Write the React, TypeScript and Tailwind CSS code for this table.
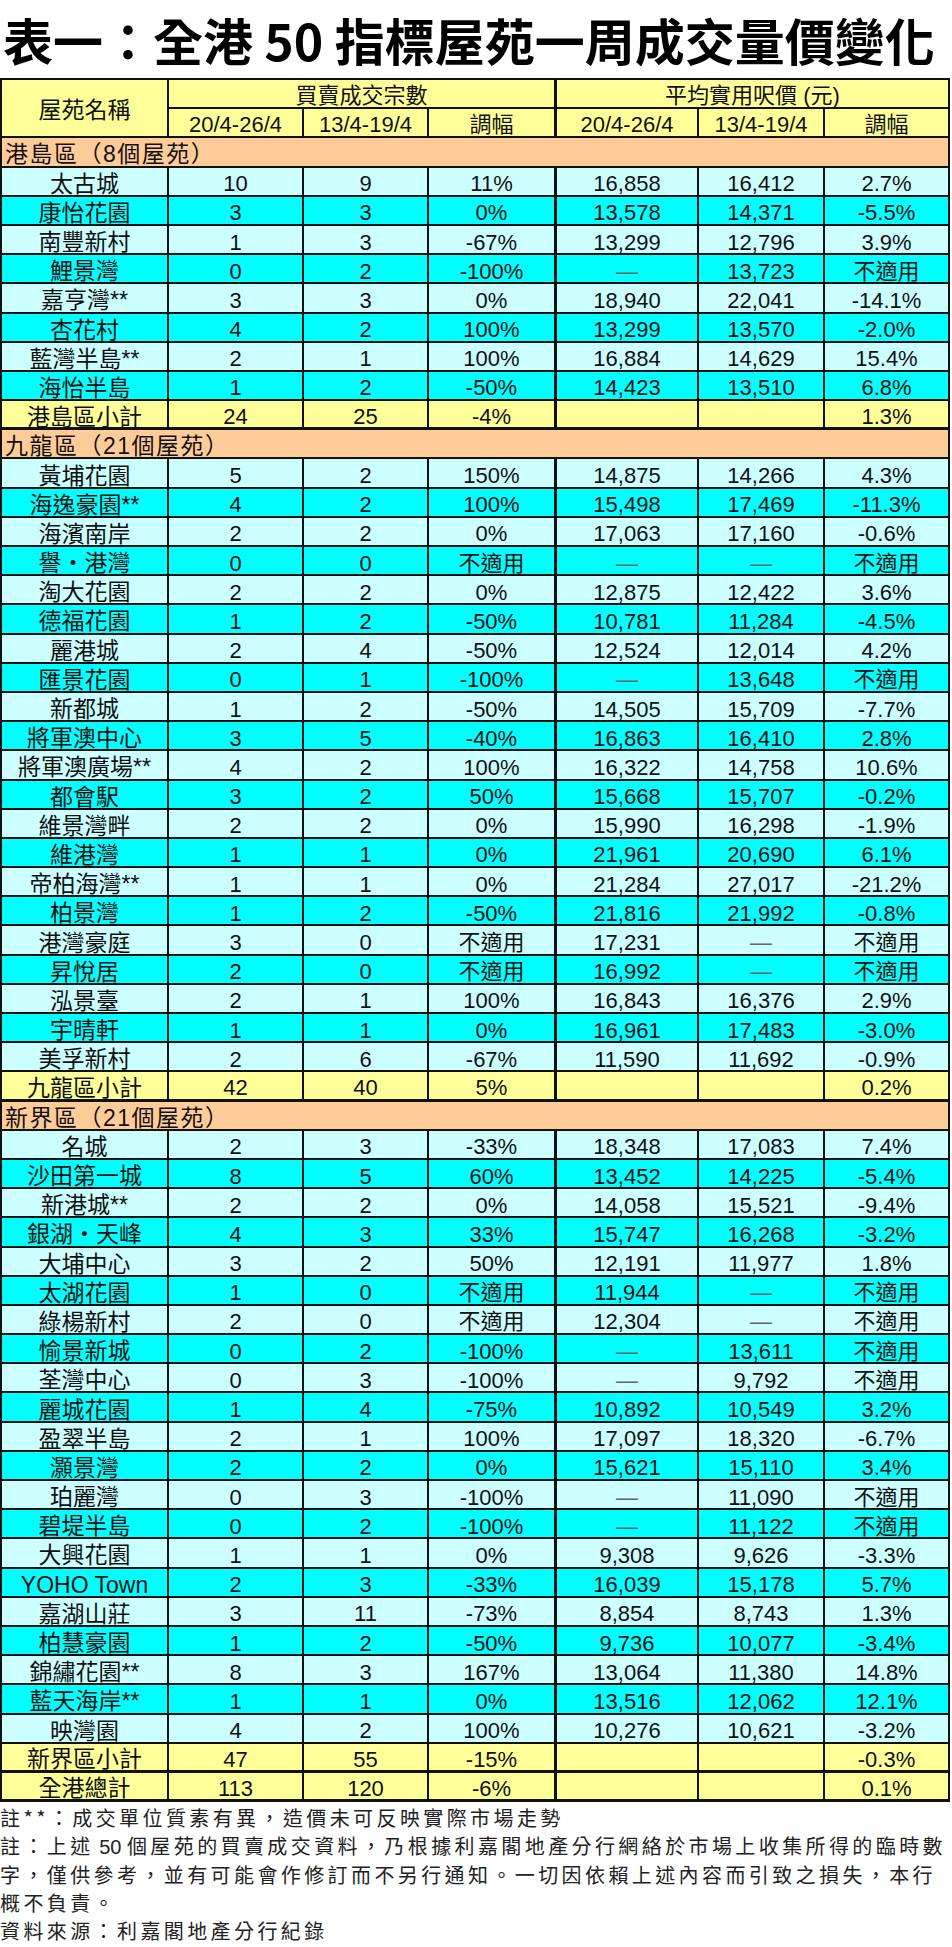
import React from "react";

type Row =
  | { k: "sec"; label: string }
  | { k: "d"; c: string[] }
  | { k: "s"; c: string[] };

const D = (...c: string[]): Row => ({ k: "d", c });
const S = (...c: string[]): Row => ({ k: "s", c });
const SEC = (label: string): Row => ({ k: "sec", label });

const rows: Row[] = [
  SEC("港島區（8個屋苑）"),
  D("太古城", "10", "9", "11%", "16,858", "16,412", "2.7%"),
  D("康怡花園", "3", "3", "0%", "13,578", "14,371", "-5.5%"),
  D("南豐新村", "1", "3", "-67%", "13,299", "12,796", "3.9%"),
  D("鯉景灣", "0", "2", "-100%", "—", "13,723", "不適用"),
  D("嘉亨灣**", "3", "3", "0%", "18,940", "22,041", "-14.1%"),
  D("杏花村", "4", "2", "100%", "13,299", "13,570", "-2.0%"),
  D("藍灣半島**", "2", "1", "100%", "16,884", "14,629", "15.4%"),
  D("海怡半島", "1", "2", "-50%", "14,423", "13,510", "6.8%"),
  S("港島區小計", "24", "25", "-4%", "", "", "1.3%"),
  SEC("九龍區（21個屋苑）"),
  D("黃埔花園", "5", "2", "150%", "14,875", "14,266", "4.3%"),
  D("海逸豪園**", "4", "2", "100%", "15,498", "17,469", "-11.3%"),
  D("海濱南岸", "2", "2", "0%", "17,063", "17,160", "-0.6%"),
  D("譽・港灣", "0", "0", "不適用", "—", "—", "不適用"),
  D("淘大花園", "2", "2", "0%", "12,875", "12,422", "3.6%"),
  D("德福花園", "1", "2", "-50%", "10,781", "11,284", "-4.5%"),
  D("麗港城", "2", "4", "-50%", "12,524", "12,014", "4.2%"),
  D("匯景花園", "0", "1", "-100%", "—", "13,648", "不適用"),
  D("新都城", "1", "2", "-50%", "14,505", "15,709", "-7.7%"),
  D("將軍澳中心", "3", "5", "-40%", "16,863", "16,410", "2.8%"),
  D("將軍澳廣場**", "4", "2", "100%", "16,322", "14,758", "10.6%"),
  D("都會駅", "3", "2", "50%", "15,668", "15,707", "-0.2%"),
  D("維景灣畔", "2", "2", "0%", "15,990", "16,298", "-1.9%"),
  D("維港灣", "1", "1", "0%", "21,961", "20,690", "6.1%"),
  D("帝柏海灣**", "1", "1", "0%", "21,284", "27,017", "-21.2%"),
  D("柏景灣", "1", "2", "-50%", "21,816", "21,992", "-0.8%"),
  D("港灣豪庭", "3", "0", "不適用", "17,231", "—", "不適用"),
  D("昇悅居", "2", "0", "不適用", "16,992", "—", "不適用"),
  D("泓景臺", "2", "1", "100%", "16,843", "16,376", "2.9%"),
  D("宇晴軒", "1", "1", "0%", "16,961", "17,483", "-3.0%"),
  D("美孚新村", "2", "6", "-67%", "11,590", "11,692", "-0.9%"),
  S("九龍區小計", "42", "40", "5%", "", "", "0.2%"),
  SEC("新界區（21個屋苑）"),
  D("名城", "2", "3", "-33%", "18,348", "17,083", "7.4%"),
  D("沙田第一城", "8", "5", "60%", "13,452", "14,225", "-5.4%"),
  D("新港城**", "2", "2", "0%", "14,058", "15,521", "-9.4%"),
  D("銀湖・天峰", "4", "3", "33%", "15,747", "16,268", "-3.2%"),
  D("大埔中心", "3", "2", "50%", "12,191", "11,977", "1.8%"),
  D("太湖花園", "1", "0", "不適用", "11,944", "—", "不適用"),
  D("綠楊新村", "2", "0", "不適用", "12,304", "—", "不適用"),
  D("愉景新城", "0", "2", "-100%", "—", "13,611", "不適用"),
  D("荃灣中心", "0", "3", "-100%", "—", "9,792", "不適用"),
  D("麗城花園", "1", "4", "-75%", "10,892", "10,549", "3.2%"),
  D("盈翠半島", "2", "1", "100%", "17,097", "18,320", "-6.7%"),
  D("灝景灣", "2", "2", "0%", "15,621", "15,110", "3.4%"),
  D("珀麗灣", "0", "3", "-100%", "—", "11,090", "不適用"),
  D("碧堤半島", "0", "2", "-100%", "—", "11,122", "不適用"),
  D("大興花園", "1", "1", "0%", "9,308", "9,626", "-3.3%"),
  D("YOHO Town", "2", "3", "-33%", "16,039", "15,178", "5.7%"),
  D("嘉湖山莊", "3", "11", "-73%", "8,854", "8,743", "1.3%"),
  D("柏慧豪園", "1", "2", "-50%", "9,736", "10,077", "-3.4%"),
  D("錦繡花園**", "8", "3", "167%", "13,064", "11,380", "14.8%"),
  D("藍天海岸**", "1", "1", "0%", "13,516", "12,062", "12.1%"),
  D("映灣園", "4", "2", "100%", "10,276", "10,621", "-3.2%"),
  S("新界區小計", "47", "55", "-15%", "", "", "-0.3%"),
  S("全港總計", "113", "120", "-6%", "", "", "0.1%"),
];

const cellBase =
  "flex items-center justify-center pt-[6px] leading-none text-[#111] whitespace-nowrap";

function Cell({
  text,
  bg,
  col,
  thickBottom,
}: {
  text: string;
  bg: string;
  col: number;
  thickBottom: boolean;
}) {
  let cls = cellBase + " " + bg;
  cls += col === 0 ? " text-[23px]" : " text-[22px]";
  if (col === 4) cls += " ml-[1px]";
  if (thickBottom) cls += " mb-[1px]";
  const isDash = text === "—";
  return (
    <div className={cls}>
      {isDash ? <span className="text-[#666]">—</span> : text}
    </div>
  );
}

export default function App() {
  let dataIdx = 0;
  const cells: React.ReactNode[] = [];
  rows.forEach((r, i) => {
    if (r.k === "sec") {
      dataIdx = 0;
      cells.push(
        <div
          key={"sec" + i}
          className="col-span-7 flex items-center pt-[6px] pl-[3px] leading-none text-[23px] tracking-[1.5px] text-[#111] whitespace-nowrap bg-[#FFCC99]"
        >
          {r.label}
        </div>
      );
      return;
    }
    let bg: string;
    if (r.k === "s") {
      bg = "bg-[#FFFF99]";
    } else {
      bg = dataIdx % 2 === 0 ? "bg-[#CCFFFF]" : "bg-[#00FFFF]";
      dataIdx++;
    }
    const thick = r.k === "s";
    r.c.forEach((t, ci) => {
      cells.push(
        <Cell key={i + "-" + ci} text={t} bg={bg} col={ci} thickBottom={thick} />
      );
    });
  });

  const hdr =
    "flex items-center justify-center pt-[5px] leading-none text-[22px] text-[#111] whitespace-nowrap bg-[#FFFF99]";

  return (
    <div className="w-[952px] h-[1947px] bg-white font-['Liberation_Sans','Noto_Sans_CJK_TC',sans-serif] text-[#111]">
      <div className="h-[78px] flex items-center pl-[3px] font-['Noto_Sans_CJK_TC',sans-serif] font-bold text-[50px] leading-none text-black whitespace-nowrap">
        表一：全港 50 指標屋苑一周成交量價變化
      </div>
      <div className="grid w-[950px] bg-[#111] p-[2px] gap-[2px] grid-cols-[165px_133px_123px_125px_141px_124px_123px] auto-rows-[27.2px]">
        <div className={hdr + " row-span-2 text-[23px]"}>屋苑名稱</div>
        <div className={hdr + " col-span-3"}>買賣成交宗數</div>
        <div className={hdr + " col-span-3 ml-[1px]"}>平均實用呎價 (元)</div>
        <div className={hdr}>20/4-26/4</div>
        <div className={hdr}>13/4-19/4</div>
        <div className={hdr}>調幅</div>
        <div className={hdr + " ml-[1px]"}>20/4-26/4</div>
        <div className={hdr}>13/4-19/4</div>
        <div className={hdr}>調幅</div>
        {cells}
      </div>
      <div className="pt-[2px] text-[20px] leading-[28px] tracking-[3.4px] text-[#222] font-['Noto_Sans_CJK_TC',sans-serif] whitespace-nowrap">
        <div>註**：成交單位質素有異，造價未可反映實際市場走勢</div>
        <div>
          註：上述<span className="tracking-normal font-['Liberation_Sans',sans-serif]"> 50 </span>個屋苑的買賣成交資料，乃根據利嘉閣地產分行網絡於市場上收集所得的臨時數
        </div>
        <div>字，僅供參考，並有可能會作修訂而不另行通知。一切因依賴上述內容而引致之損失，本行</div>
        <div>概不負責。</div>
        <div>資料來源：利嘉閣地產分行紀錄</div>
      </div>
    </div>
  );
}
